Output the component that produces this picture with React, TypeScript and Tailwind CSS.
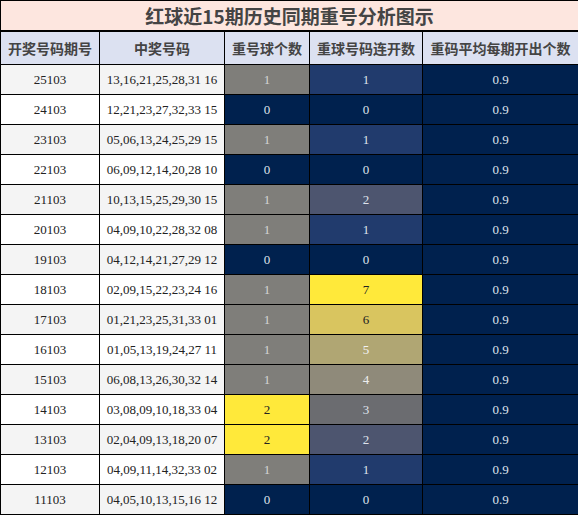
const rows: [string, string, number, number][] = [
  ["25103", "13,16,21,25,28,31 16", 1, 1],
  ["24103", "12,21,23,27,32,33 15", 0, 0],
  ["23103", "05,06,13,24,25,29 15", 1, 1],
  ["22103", "06,09,12,14,20,28 10", 0, 0],
  ["21103", "10,13,15,25,29,30 15", 1, 2],
  ["20103", "04,09,10,22,28,32 08", 1, 1],
  ["19103", "04,12,14,21,27,29 12", 0, 0],
  ["18103", "02,09,15,22,23,24 16", 1, 7],
  ["17103", "01,21,23,25,31,33 01", 1, 6],
  ["16103", "01,05,13,19,24,27 11", 1, 5],
  ["15103", "06,08,13,26,30,32 14", 1, 4],
  ["14103", "03,08,09,10,18,33 04", 2, 3],
  ["13103", "02,04,09,13,18,20 07", 2, 2],
  ["12103", "04,09,11,14,32,33 02", 1, 1],
  ["11103", "04,05,10,13,15,16 12", 0, 0],
];

const countCls = (n: number) =>
  n === 2
    ? "bg-[#ffe93a] text-[#222]"
    : n === 1
    ? "bg-[#7f7e7a] text-[#d4d4d4]"
    : "bg-[#00214e] text-[#dfe3ec]";

const streakCls: Record<number, string> = {
  0: "bg-[#00214e] text-[#dfe3ec]",
  1: "bg-[#213b6d] text-[#dfe3ec]",
  2: "bg-[#4d556f] text-[#dfe3ec]",
  3: "bg-[#6b6c70] text-[#dfe3ec]",
  4: "bg-[#8f8a7a] text-[#eeeeee]",
  5: "bg-[#b0a673] text-[#f2f2f2]",
  6: "bg-[#d9c55f] text-[#222]",
  7: "bg-[#ffe93a] text-[#222]",
};

const headers = ["开奖号码期号", "中奖号码", "重号球个数", "重球号码连开数", "重码平均每期开出个数"];

export default function App() {
  return (
    <div className="w-[578px] h-[515px] overflow-hidden bg-white">
      <table className="w-[578px] border-collapse table-fixed">
        <colgroup>
          <col className="w-[99px]" />
          <col className="w-[125px]" />
          <col className="w-[85px]" />
          <col className="w-[113px]" />
          <col className="w-[156px]" />
        </colgroup>
        <thead>
          <tr className="h-[30px]">
            <th
              colSpan={5}
              className="border border-black border-b-2 bg-[#fde6df] text-[#444] text-[19px] font-bold leading-none font-['Noto_Sans_CJK_SC',sans-serif]"
            >
              红球近15期历史同期重号分析图示
            </th>
          </tr>
          <tr className="h-[34px]">
            {headers.map((h) => (
              <th
                key={h}
                className="border border-black bg-[#dce1f1] text-[#444] text-[14px] font-semibold leading-none font-['Noto_Sans_CJK_SC',sans-serif]"
              >
                {h}
              </th>
            ))}
          </tr>
        </thead>
        <tbody className="font-['Liberation_Serif',serif] text-[13px]">
          {rows.map(([issue, nums, cnt, streak], i) => {
            const bg = i % 2 === 0 ? "bg-[#f4f4f4]" : "bg-white";
            return (
              <tr key={issue} className="h-[30px]">
                <td className={`border border-black text-center text-[#222] ${bg}`}>{issue}</td>
                <td className={`border border-black text-center text-[#222] ${bg}`}>{nums}</td>
                <td className={`border border-black text-center ${countCls(cnt)}`}>{cnt}</td>
                <td className={`border border-black text-center ${streakCls[streak]}`}>{streak}</td>
                <td className="border border-black text-center bg-[#00214e] text-[#dfe3ec]">0.9</td>
              </tr>
            );
          })}
        </tbody>
      </table>
    </div>
  );
}
